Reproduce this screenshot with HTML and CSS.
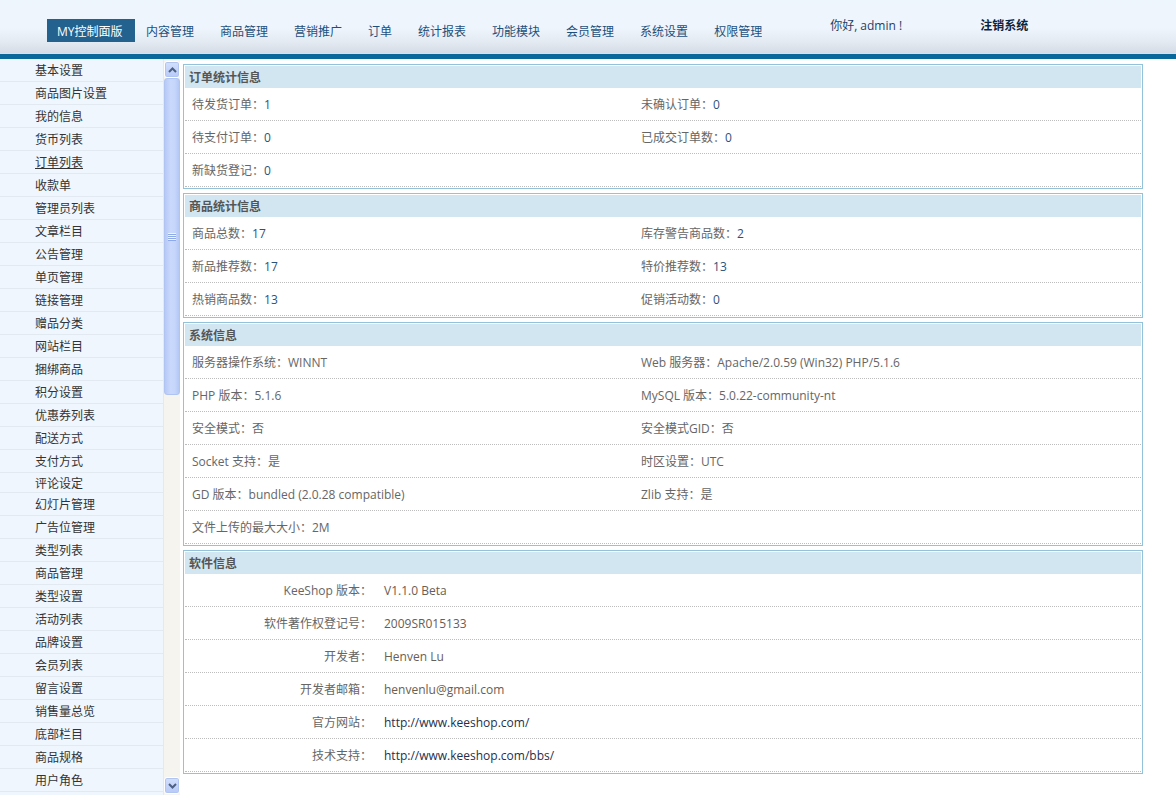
FILE: index.html
```html
<!DOCTYPE html>
<html lang="zh-CN">
<head>
<meta charset="utf-8">
<title>KeeShop 管理后台</title>
<link rel="stylesheet" href="styles.css">
</head>
<body>
<header class="top">
  <nav class="menu">
    <a class="menu-item active">MY控制面版</a>
    <a class="menu-item">内容管理</a>
    <a class="menu-item">商品管理</a>
    <a class="menu-item">营销推广</a>
    <a class="menu-item">订单</a>
    <a class="menu-item">统计报表</a>
    <a class="menu-item">功能模块</a>
    <a class="menu-item">会员管理</a>
    <a class="menu-item">系统设置</a>
    <a class="menu-item">权限管理</a>
  </nav>
  <div class="user">你好, admin !</div>
  <a class="logout">注销系统</a>
</header>
<div class="bar"></div>
<div class="main">
  <aside class="side">
    <ul class="side-list">
      <li>基本设置</li>
      <li>商品图片设置</li>
      <li>我的信息</li>
      <li>货币列表</li>
      <li class="hover">订单列表</li>
      <li>收款单</li>
      <li>管理员列表</li>
      <li>文章栏目</li>
      <li>公告管理</li>
      <li>单页管理</li>
      <li>链接管理</li>
      <li>赠品分类</li>
      <li>网站栏目</li>
      <li>捆绑商品</li>
      <li>积分设置</li>
      <li>优惠券列表</li>
      <li>配送方式</li>
      <li>支付方式</li>
      <li class="short">评论设定</li>
      <li>幻灯片管理</li>
      <li>广告位管理</li>
      <li>类型列表</li>
      <li>商品管理</li>
      <li>类型设置</li>
      <li>活动列表</li>
      <li>品牌设置</li>
      <li>会员列表</li>
      <li>留言设置</li>
      <li>销售量总览</li>
      <li>底部栏目</li>
      <li>商品规格</li>
      <li>用户角色</li>
    </ul>
    <div class="sb">
      <div class="sb-btn">
        <svg width="9" height="6" viewBox="0 0 9 6"><path d="M1 5 L4.5 1.5 L8 5" fill="none" stroke="#4d6185" stroke-width="2"/></svg>
      </div>
      <div class="sb-thumb">
        <div class="grip"><span></span><span></span><span></span><span></span></div>
      </div>
      <div class="sb-track"></div>
      <div class="sb-btn">
        <svg width="9" height="6" viewBox="0 0 9 6"><path d="M1 1 L4.5 4.5 L8 1" fill="none" stroke="#4d6185" stroke-width="2"/></svg>
      </div>
    </div>
  </aside>
  <section class="content">
    <div class="panel">
      <div class="panel-head">订单统计信息</div>
      <div class="row"><div class="cell">待发货订单：<span class="val">1</span></div><div class="cell">未确认订单：<span class="val">0</span></div></div>
      <div class="row"><div class="cell">待支付订单：<span class="val">0</span></div><div class="cell">已成交订单数：<span class="val">0</span></div></div>
      <div class="row"><div class="cell">新缺货登记：<span class="val">0</span></div><div class="cell"></div></div>
    </div>
    <div class="panel">
      <div class="panel-head">商品统计信息</div>
      <div class="row"><div class="cell">商品总数：<span class="val">17</span></div><div class="cell">库存警告商品数：<span class="val">2</span></div></div>
      <div class="row"><div class="cell">新品推荐数：<span class="val">17</span></div><div class="cell">特价推荐数：<span class="val">13</span></div></div>
      <div class="row"><div class="cell">热销商品数：<span class="val">13</span></div><div class="cell">促销活动数：<span class="val">0</span></div></div>
    </div>
    <div class="panel">
      <div class="panel-head">系统信息</div>
      <div class="row"><div class="cell">服务器操作系统：WINNT</div><div class="cell">Web 服务器：Apache/2.0.59 (Win32) PHP/5.1.6</div></div>
      <div class="row"><div class="cell">PHP 版本：5.1.6</div><div class="cell">MySQL 版本：5.0.22-community-nt</div></div>
      <div class="row"><div class="cell">安全模式：否</div><div class="cell">安全模式GID：否</div></div>
      <div class="row"><div class="cell">Socket 支持：是</div><div class="cell">时区设置：UTC</div></div>
      <div class="row"><div class="cell">GD 版本：bundled (2.0.28 compatible)</div><div class="cell">Zlib 支持：是</div></div>
      <div class="row"><div class="cell">文件上传的最大大小：2M</div><div class="cell"></div></div>
    </div>
    <div class="panel">
      <div class="panel-head">软件信息</div>
      <div class="row info"><div class="label">KeeShop 版本：</div><div class="value">V1.1.0 Beta</div></div>
      <div class="row info"><div class="label">软件著作权登记号：</div><div class="value">2009SR015133</div></div>
      <div class="row info"><div class="label">开发者：</div><div class="value">Henven Lu</div></div>
      <div class="row info"><div class="label">开发者邮箱：</div><div class="value">henvenlu@gmail.com</div></div>
      <div class="row info"><div class="label">官方网站：</div><div class="value"><a class="link">http://www.keeshop.com/</a></div></div>
      <div class="row info"><div class="label">技术支持：</div><div class="value"><a class="link">http://www.keeshop.com/bbs/</a></div></div>
    </div>
  </section>
</div>
</body>
</html>
```

FILE: styles.css
```css
* { box-sizing: border-box; }
html, body {
  margin: 0;
  padding: 0;
  height: 795px;
  overflow: hidden;
  background: #fff;
  font-family: "Open Sans", "Noto Sans CJK SC", sans-serif;
  font-size: 12px;
  color: #555;
}
a { text-decoration: none; cursor: pointer; }

.top {
  height: 54px;
  display: flex;
  align-items: flex-start;
  background: linear-gradient(to bottom, #eef6fd 0px, #eef5fc 28px, #e4eaf2 42px, #d6dce5 53px, #dfe5ec 54px);
}
.menu {
  display: flex;
  padding: 19px 0 0 47px;
  gap: 26px;
}
.menu-item {
  height: 23px;
  line-height: 25px;
  color: #1d4f7c;
  font-size: 12px;
  white-space: nowrap;
  overflow: hidden;
}
.menu-item.active {
  width: 88px;
  padding-left: 10px;
  margin-right: -15px;
  background: #23618f;
  color: #fff;
}
.user {
  margin: 18px 0 0 68px;
  width: 150px;
  line-height: 16px;
  color: #1d3f66;
}
.logout {
  margin-top: 18px;
  line-height: 16px;
  font-weight: bold;
  color: #0c2440;
}
.bar {
  height: 5px;
  background: #0a689a;
}

.main {
  display: flex;
  height: 736px;
}
.side {
  width: 180px;
  display: flex;
  height: 100%;
  margin-right: 3px;
}
.side-list {
  list-style: none;
  margin: 0;
  padding: 0;
  width: 163px;
  height: 100%;
  overflow: hidden;
  background: #eff6fe;
}
.side-list li {
  height: 23px;
  line-height: 24px;
  padding-left: 35px;
  color: #333;
  border-bottom: 1px solid #e3e9f0;
}
.side-list li.short { height: 20px; line-height: 21px; }
.side-list li.hover { text-decoration: underline; }

.sb {
  width: 17px;
  height: 100%;
  display: flex;
  flex-direction: column;
  padding: 2px 0 1px 0;
  background: #f5f4ef;
  border-left: 1px solid #ece8da;
}
.sb-btn {
  height: 17px;
  width: 16px;
  border: 1px solid #fff;
  border-radius: 3px;
  background: linear-gradient(to bottom, #d3e0fd, #b7caf7);
  display: flex;
  align-items: center;
  justify-content: center;
  box-shadow: inset 0 0 0 1px #b2c5f1;
}
.sb-thumb {
  height: 317px;
  width: 16px;
  border: 1px solid #b0c4f2;
  border-radius: 3px;
  background: linear-gradient(to right, #b6c9f6, #c9d8fc 40%, #c6d6fb 70%, #b4c8f5);
  display: flex;
  align-items: center;
  justify-content: center;
}
.grip {
  display: flex;
  flex-direction: column;
  gap: 1px;
}
.grip span {
  display: block;
  width: 8px;
  height: 1px;
  background: #eef3ff;
  box-shadow: 0 1px 0 #8fa9e6;
}
.sb-track { flex: 1; }

.content {
  width: 960px;
  padding-top: 5px;
}
.panel {
  border: 1px solid #92c3db;
  padding: 1px;
  margin-bottom: 4px;
}
.panel-head {
  height: 22px;
  line-height: 23px;
  padding-left: 4px;
  background: #d1e6f1;
  font-weight: bold;
  color: #555;
}
.row {
  display: grid;
  grid-template-columns: 449px 1fr;
  height: 33px;
  border-bottom: 1px dotted #bdbdbd;
}
.cell {
  padding-left: 7px;
  line-height: 33px;
  color: #666;
  white-space: nowrap;
}
.val { color: #2d5278; }
.row.info { grid-template-columns: 192px 1fr; }
.label {
  text-align: right;
  padding-right: 5px;
  line-height: 33px;
  color: #666;
}
.value {
  padding-left: 7px;
  line-height: 33px;
  color: #6a5d52;
}
.link { color: #1f2f4a; }
```
